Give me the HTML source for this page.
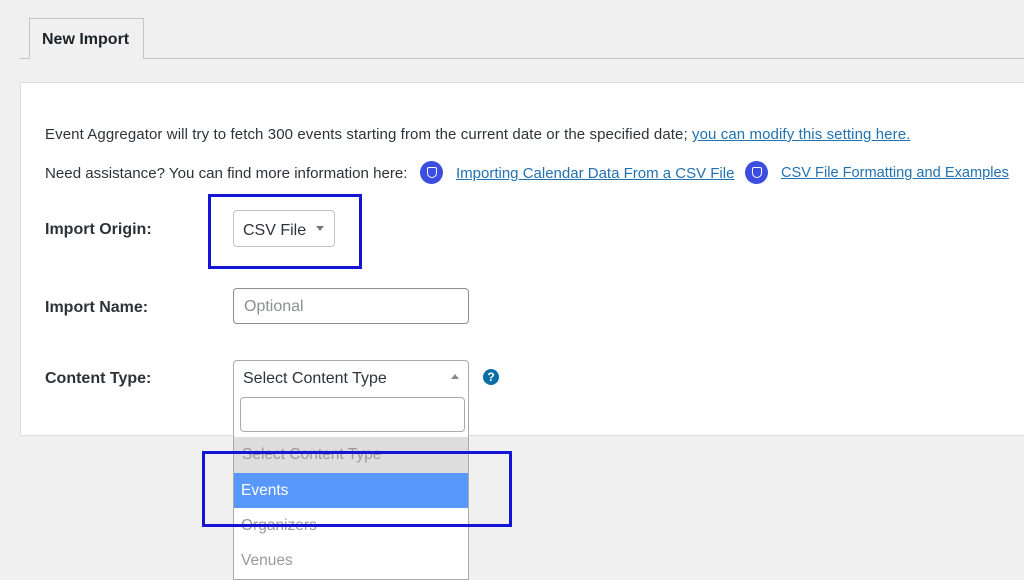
<!DOCTYPE html>
<html><head><style>
body{margin:0;width:1024px;height:573px;background:#f0f0f1;font-family:"Liberation Sans",sans-serif;color:#2c3338;position:relative;overflow:hidden;font-size:15px}
.a{position:absolute;white-space:nowrap}
a{color:#2271b1;text-decoration:underline}
.ic{position:absolute;width:23px;height:23px;border-radius:50%;background:#3b4ee0}
.ic:after{content:"";position:absolute;left:7px;top:6px;width:8px;height:9px;border:1.5px solid #fff;border-radius:2px 2px 5px 5px}
.box{position:absolute;border:3px solid #1414d4;box-sizing:border-box}
</style></head><body>
<div class="a" style="left:20px;top:58px;width:1004px;border-top:1px solid #c3c4c7"></div>
<div class="a" style="left:29px;top:18px;width:115px;height:41px;border:1px solid #c3c4c7;border-bottom:none;background:#f0f0f1;box-sizing:border-box"></div>
<div class="a" style="left:42px;top:31px;font-weight:bold;font-size:16px;color:#1d2327">New Import</div>
<div class="a" style="left:20px;top:82px;width:1010px;height:354px;background:#fff;border:1px solid #dcdcde;box-sizing:border-box"></div>
<div class="a" style="left:45px;top:126px;font-size:15px;letter-spacing:0.1px">Event Aggregator will try to fetch 300 events starting from the current date or the specified date; <a>you can modify this setting here.</a></div>
<div class="a" style="left:45px;top:165px;font-size:15.1px">Need assistance? You can find more information here:</div>
<div class="ic" style="left:420px;top:161px"></div>
<div class="a" style="left:456px;top:165px;font-size:15px"><a>Importing Calendar Data From a CSV File </a></div>
<div class="ic" style="left:745px;top:161px"></div>
<div class="a" style="left:781px;top:165px;font-size:14.6px"><a>CSV File Formatting and Examples</a></div>
<div class="a" style="left:45px;top:221px;font-weight:bold;font-size:16px">Import Origin:</div>
<div class="a" style="left:233px;top:210px;width:102px;height:37px;border:1px solid #c3c4c7;border-radius:4px;box-sizing:border-box"></div>
<div class="a" style="left:243px;top:222px;font-size:16px">CSV File</div>
<div class="a" style="left:316px;top:226px;border:4px solid transparent;border-top:5px solid #777"></div>
<div class="box" style="left:208px;top:194px;width:154px;height:75px"></div>
<div class="a" style="left:45px;top:299px;font-weight:bold;font-size:16px">Import Name:</div>
<div class="a" style="left:233px;top:288px;width:236px;height:36px;border:1px solid #8c8f94;border-radius:4px;box-sizing:border-box"></div>
<div class="a" style="left:244px;top:298px;font-size:16px;color:#8c8f94">Optional</div>
<div class="a" style="left:45px;top:370px;font-weight:bold;font-size:16px">Content Type:</div>
<div class="a" style="left:233px;top:360px;width:236px;height:220px;border:1px solid #aaa;border-radius:4px 4px 0 0;background:#fff;box-sizing:border-box"></div>
<div class="a" style="left:243px;top:370px;font-size:16px">Select Content Type</div>
<div class="a" style="left:451px;top:374px;border:4px solid transparent;border-bottom:5px solid #888;border-top:none"></div>
<div class="a" style="left:240px;top:397px;width:225px;height:35px;border:1px solid #aaa;border-radius:4px;box-sizing:border-box"></div>
<div class="a" style="left:234px;top:437px;width:234px;height:36px;background:#ddd"></div>
<div class="a" style="left:242px;top:446px;color:#999;font-size:15.5px">Select Content Type</div>
<div class="a" style="left:234px;top:473px;width:234px;height:35px;background:#5897fb"></div>
<div class="a" style="left:241px;top:482px;color:#fff;font-size:15.5px">Events</div>
<div class="a" style="left:241px;top:517px;color:#999;font-size:15.5px">Organizers</div>
<div class="a" style="left:241px;top:552px;color:#999;font-size:15.5px">Venues</div>
<div class="box" style="left:202px;top:451px;width:310px;height:76px"></div>
<div class="a" style="left:483px;top:369px;width:16px;height:16px;border-radius:50%;background:#0a6da3;color:#fff;font-size:12px;font-weight:bold;text-align:center;line-height:16px">?</div>
</body></html>
